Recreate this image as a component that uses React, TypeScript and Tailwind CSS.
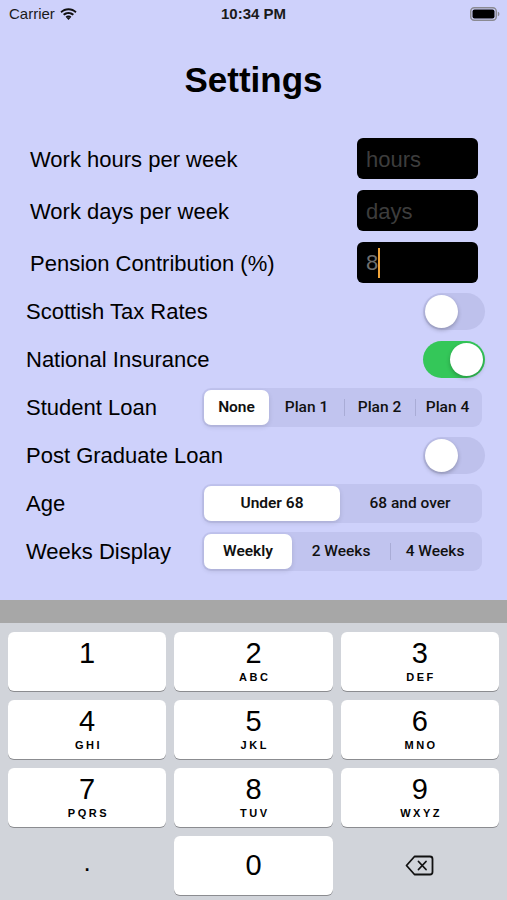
import React from "react";

const SANS = { fontFamily: '"Liberation Sans", Arial, sans-serif' };
const SEG = { fontFamily: 'Roboto, "Liberation Sans", sans-serif' };

function Toggle({ on }: { on: boolean }) {
  return (
    <div
      className={`relative w-[62px] h-[37px] rounded-full ${on ? "bg-[#34c759]" : "bg-[#bec1ec]"}`}
    >
      <div
        className={`absolute top-[2px] w-[33px] h-[33px] rounded-full bg-white shadow-[0_2px_4px_rgba(0,0,0,0.25)] ${
          on ? "right-[2px]" : "left-[2px]"
        }`}
      />
    </div>
  );
}

function Segmented({ items, widths, selected }: { items: string[]; widths: number[]; selected: number }) {
  return (
    <div className="flex items-center h-[39px] w-[280px] rounded-[9px] bg-[#c1c4ef] p-[2px]" style={SEG}>
      {items.map((it, i) => {
        const active = i === selected;
        const showSep = i > 0 && i !== selected && i - 1 !== selected;
        return (
          <div key={it} className="relative h-full flex items-center justify-center" style={{ width: widths[i] }}>
            {showSep && <span className="absolute left-0 top-[9px] h-[17px] w-px bg-[#a9acd6]" />}
            <div
              className={`w-full h-full flex items-center justify-center pt-[2px] rounded-[7px] text-[15.5px] text-[#111] ${
                active ? "bg-white font-semibold shadow-[0_2px_5px_rgba(0,0,0,0.12)]" : "font-medium"
              }`}
            >
              {it}
            </div>
          </div>
        );
      })}
    </div>
  );
}

function InputRow({ label, placeholder, value }: { label: string; placeholder?: string; value?: string }) {
  return (
    <div className="flex items-center justify-between h-[41px] pl-[30px] pr-[29px]">
      <span className="text-[22px] text-black pt-[2px]">{label}</span>
      <div className="w-[121px] h-[41px] rounded-[6px] bg-black flex items-center px-[9px] text-[22px]">
        {value ? (
          <>
            <span className="text-[#6e6e6e]">{value}</span>
            <span className="w-[2px] h-[30px] bg-[#f0a43a]" />
          </>
        ) : (
          <span className="text-[#3d3d3d] pt-[1px]">{placeholder}</span>
        )}
      </div>
    </div>
  );
}

function Row({ label, children, right = 22 }: { label: string; children: React.ReactNode; right?: number }) {
  return (
    <div className="flex items-center justify-between h-[48px] pl-[26px]" style={{ paddingRight: right }}>
      <span className="text-[22px] text-black pt-[1px]">{label}</span>
      {children}
    </div>
  );
}

const KEYS = [
  ["1", ""],
  ["2", "ABC"],
  ["3", "DEF"],
  ["4", "GHI"],
  ["5", "JKL"],
  ["6", "MNO"],
  ["7", "PQRS"],
  ["8", "TUV"],
  ["9", "WXYZ"],
];

export default function App() {
  return (
    <div className="w-[507px] h-[900px] flex flex-col overflow-hidden" style={SANS}>
      <div className="h-[600px] bg-[#ced1fb] flex flex-col">
        {/* status bar */}
        <div className="h-[28px] flex items-center justify-between pl-[9px] pr-[7px] relative">
          <div className="flex items-center gap-[5px] text-[15px] text-[#1a1a1a]">
            <span>Carrier</span>
            <svg width="17" height="13" viewBox="0 0 17 13">
              <path d="M8.5 2.2c2.6 0 5 1 6.8 2.7l1.3-1.4C14.4 1.4 11.6.2 8.5.2S2.6 1.4.4 3.5l1.3 1.4C3.5 3.2 5.9 2.2 8.5 2.2z" fill="#111" />
              <path d="M8.5 5.9c1.6 0 3 .6 4.2 1.6l1.3-1.4C12.5 4.7 10.6 3.9 8.5 3.9S4.5 4.7 3 6.1l1.3 1.4c1.2-1 2.6-1.6 4.2-1.6z" fill="#111" />
              <path d="M8.5 9.4c.7 0 1.3.3 1.8.7L8.5 12 6.7 10.1c.5-.4 1.1-.7 1.8-.7z" fill="#111" />
              <path d="M8.5 7.6c1.1 0 2.1.4 2.9 1.1l-1.1 1.3c-.5-.4-1.1-.6-1.8-.6s-1.3.2-1.8.6L5.6 8.7c.8-.7 1.8-1.1 2.9-1.1z" fill="#111" />
            </svg>
          </div>
          <span className="absolute left-1/2 -translate-x-1/2 text-[15px] font-bold text-[#1a1a1a]">10:34 PM</span>
          <svg width="30" height="14" viewBox="0 0 30 14">
            <rect x="0.75" y="0.75" width="25.5" height="12.5" rx="3.5" fill="none" stroke="#8a8a92" strokeWidth="1.5" />
            <rect x="2.5" y="2.5" width="22" height="9" rx="2" fill="#000" />
            <path d="M27.8 4.8c1 .3 1.6 1.1 1.6 2.2s-.6 1.9-1.6 2.2z" fill="#8a8a92" />
          </svg>
        </div>

        <div className="mt-[32px] h-[40px] flex items-center justify-center text-[35px] font-bold text-black">
          Settings
        </div>

        <div className="mt-[38px] flex flex-col gap-[11px]">
          <InputRow label="Work hours per week" placeholder="hours" />
          <InputRow label="Work days per week" placeholder="days" />
          <InputRow label="Pension Contribution (%)" value="8" />
        </div>

        <div className="mt-[4px] flex flex-col">
          <Row label="Scottish Tax Rates">
            <Toggle on={false} />
          </Row>
          <Row label="National Insurance">
            <Toggle on={true} />
          </Row>
          <Row label="Student Loan" right={25}>
            <Segmented items={["None", "Plan 1", "Plan 2", "Plan 4"]} widths={[65, 75, 71, 65]} selected={0} />
          </Row>
          <Row label="Post Graduate Loan">
            <Toggle on={false} />
          </Row>
          <Row label="Age" right={25}>
            <Segmented items={["Under 68", "68 and over"]} widths={[136, 140]} selected={0} />
          </Row>
          <Row label="Weeks Display" right={25}>
            <Segmented items={["Weekly", "2 Weeks", "4 Weeks"]} widths={[88, 98, 90]} selected={0} />
          </Row>
        </div>
      </div>

      <div className="h-[23px] bg-[#a7a7a7]" />

      <div className="flex-1 bg-[#d1d4da] px-[8px] pt-[9px]">
        <div className="grid grid-cols-3 gap-x-[8px] gap-y-[9px]">
          {KEYS.map(([d, l]) => (
            <div
              key={d}
              className="h-[59px] rounded-[6px] bg-white shadow-[0_1px_0_#8b8c90] flex flex-col items-center text-black"
            >
              <span className="mt-[6px] text-[29px] leading-[30px]">{d}</span>
              {l && <span className="mt-[3px] text-[11px] leading-[12px] font-bold tracking-[2.5px] pl-[2.5px]">{l}</span>}
            </div>
          ))}
          <div className="h-[59px] flex items-center justify-center text-[26px] text-black pb-[6px]">.</div>
          <div className="h-[59px] rounded-[6px] bg-white shadow-[0_1px_0_#8b8c90] flex items-center justify-center text-[29px] text-black">
            0
          </div>
          <div className="h-[59px] flex items-center justify-center">
            <svg width="29" height="21" viewBox="0 0 29 21" fill="none" stroke="#111" strokeWidth="1.8" strokeLinejoin="round" strokeLinecap="round">
              <path d="M9.5 1.5h15.5a2.5 2.5 0 0 1 2.5 2.5v13a2.5 2.5 0 0 1-2.5 2.5H9.5L1.5 10.5z" />
              <path d="M13.5 6.5l7.5 8M21 6.5l-7.5 8" />
            </svg>
          </div>
        </div>
      </div>
    </div>
  );
}
